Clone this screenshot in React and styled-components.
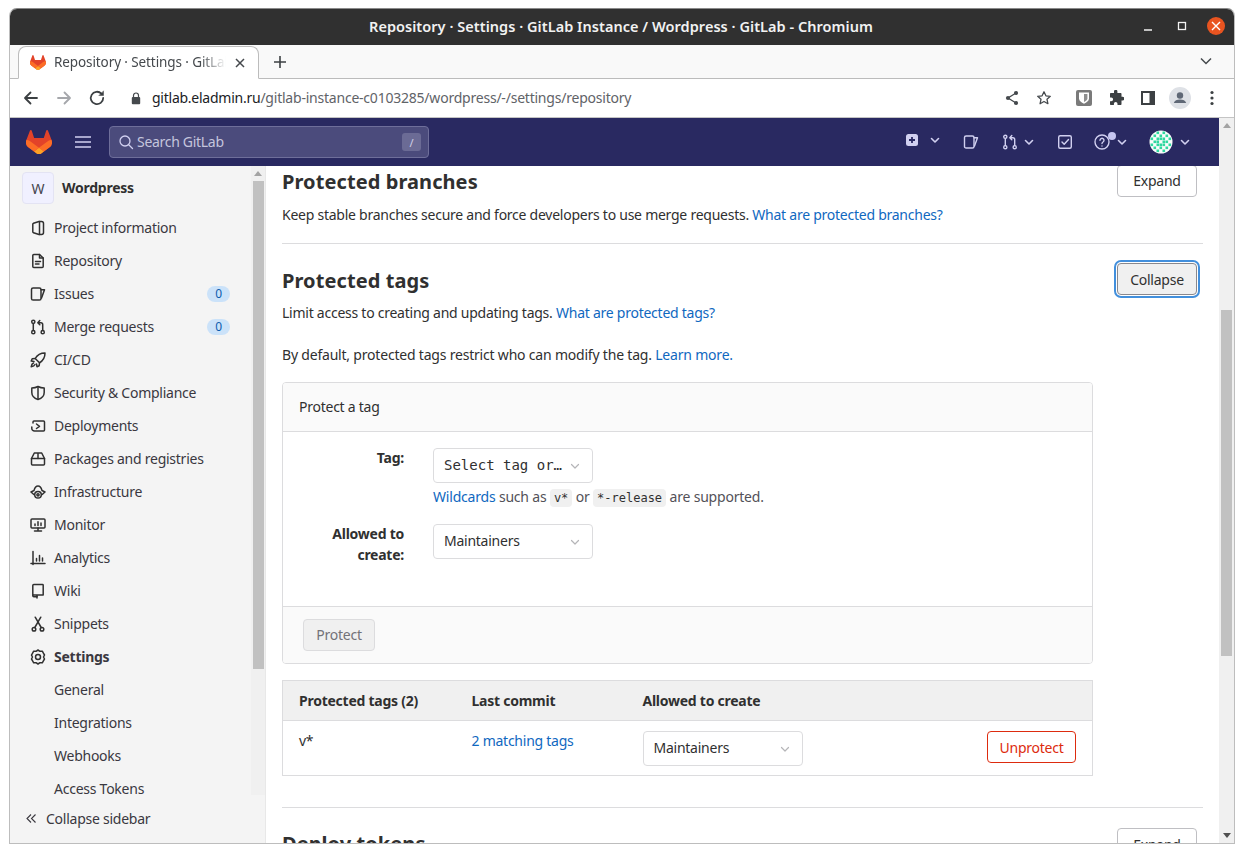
import React from 'react';
import styled, { createGlobalStyle } from 'styled-components';

const Global = createGlobalStyle`
  html, body { margin: 0; padding: 0; background: #fff; overflow: hidden; }
  body { font-family: "Noto Sans", "Open Sans", sans-serif; font-size: 14px; color: #303030; letter-spacing: -0.25px; }
  * { box-sizing: border-box; }
`;

const Window = styled.div`
  margin: 8px 0 0 9px;
  width: 1226px;
  height: 836px;
  border: 1px solid #bdbdbd;
  border-top-color: #8a8a8a;
  border-radius: 8px 8px 0 0;
  display: flex;
  flex-direction: column;
  overflow: hidden;
  background: #fff;
`;
const TitleBar = styled.div`
  height: 36px;
  flex: none;
  background: #303030;
  color: #f2f2f2;
  display: flex;
  align-items: center;
  position: relative;
  justify-content: center;
  font-size: 14.5px;
  font-weight: 600;
  letter-spacing: 0.04px;
  padding: 0 2px 2px 0;
`;
const WinControls = styled.div`
  position: absolute;
  right: 9px;
  top: 8px;
  display: flex;
  align-items: center;
  gap: 16px;
`;
const CloseCircle = styled.div`
  width: 18px;
  height: 18px;
  border-radius: 50%;
  background: #e95420;
  display: flex;
  align-items: center;
  justify-content: center;
`;
const TabStrip = styled.div`
  height: 34px;
  flex: none;
  background: #f9f9f9;
  border-bottom: 1px solid #bcbcbc;
  display: flex;
  align-items: flex-end;
  padding-left: 8px;
  position: relative;
`;
const Tab = styled.div`
  width: 241px;
  height: 33px;
  margin-bottom: -1px;
  background: #fff;
  border: 1px solid #bcbcbc;
  border-bottom: 1px solid #fff;
  border-radius: 8px 8px 0 0;
  display: flex;
  align-items: center;
  padding-left: 11px;
  gap: 8px;
`;
const TabTitle = styled.span`
  width: 172px;
  overflow: hidden;
  white-space: nowrap;
  font-size: 13.5px;
  letter-spacing: -0.1px;
  color: #45494d;
  margin-top: -2px;
  -webkit-mask-image: linear-gradient(to right, #000 85%, transparent 100%);
  mask-image: linear-gradient(to right, #000 85%, transparent 100%);
`;
const NewTab = styled.div`
  margin: 0 0 7px 14px;
  height: 18px;
  display: flex;
  align-items: center;
`;
const TabMenu = styled.div`
  margin: 0 21px 8px auto;
  height: 18px;
  display: flex;
  align-items: center;
`;
const Toolbar = styled.div`
  height: 39px;
  flex: none;
  background: #fff;
  border-bottom: 1px solid #c4c4c4;
  display: flex;
  align-items: center;
  padding: 0 6px 0 12px;
`;
const NavIcons = styled.div`
  display: flex;
  align-items: center;
  gap: 15px;
  margin-right: 12px;
`;
const UrlPill = styled.div`
  width: 944px;
  height: 30px;
  border-radius: 15px;
  background: #fff;
  display: flex;
  align-items: center;
  padding-left: 13px;
  font-size: 14px;
  white-space: nowrap;
`;
const UrlHost = styled.span`
  color: #202124;
  margin: -2px 0 0 11px;
`;
const UrlPath = styled.span`
  color: #5f6368;
  margin-top: -2px;
  letter-spacing: -0.22px;
`;
const UrlEnd = styled.div`
  margin-left: auto;
  display: flex;
  align-items: center;
  gap: 16px;
  margin-right: 10px;
`;
const ExtIcons = styled.div`
  display: flex;
  align-items: center;
  margin-left: 6px;
`;
const ExtSlot = styled.div`
  width: 32px;
  display: flex;
  align-items: center;
  justify-content: center;
`;
const Viewport = styled.div`
  flex: 1;
  min-height: 0;
  display: flex;
`;
const Page = styled.div`
  flex: 1;
  min-width: 0;
  display: flex;
  flex-direction: column;
`;
const NavBar = styled.header`
  height: 48px;
  flex: none;
  background: #292961;
  display: flex;
  align-items: center;
  padding: 0 0 0 16px;
`;
const Hamburger = styled.div`
  margin-left: 23px;
  margin-right: 18px;
  display: flex;
`;
const SearchBox = styled.div`
  width: 320px;
  height: 32px;
  background: #4b4b7c;
  border: 1px solid #6e6e9a;
  border-radius: 4px;
  display: flex;
  align-items: center;
  padding: 0 7px 0 8px;
  color: #c5c5dd;
  font-size: 14px;
  gap: 3px;
`;
const SearchText = styled.span`
  margin-top: -2px;
  letter-spacing: -0.3px;
`;
const SlashKey = styled.span`
  margin-left: auto;
  width: 19px;
  height: 18px;
  border-radius: 3px;
  background: #6b6b95;
  color: #d1d0e8;
  font-size: 11px;
  display: flex;
  align-items: center;
  justify-content: center;
`;
const NavRight = styled.div`
  margin-left: auto;
  display: flex;
  align-items: center;
  margin-right: 28px;
`;
const NavGroup = styled.div`
  display: flex;
  align-items: center;
  gap: ${p => p.$gap ?? 5}px;
  margin-left: ${p => p.$ml ?? 0}px;
  margin-top: ${p => p.$mt ?? 0}px;
  position: relative;
`;
const Dot = styled.span`
  position: absolute;
  width: 8px;
  height: 8px;
  border-radius: 50%;
  background: #c5c5f0;
  left: 14px;
  top: -2px;
`;
const Body = styled.div`
  flex: 1;
  min-height: 0;
  display: flex;
`;
const Sidebar = styled.aside`
  width: 256px;
  flex: none;
  background: #f4f4f4;
  display: flex;
  flex-direction: column;
  border-right: 1px solid #e8e8e8;
`;
const SideTop = styled.div`
  flex: 1;
  min-height: 0;
  display: flex;
`;
const SideScroll = styled.nav`
  flex: 1;
  min-width: 0;
  overflow: hidden;
  padding: 6px 21px 0 12px;
`;
const ProjectRow = styled.div`
  display: flex;
  align-items: center;
  height: 32px;
  gap: 8px;
  margin-bottom: 7px;
`;
const ProjectAvatar = styled.div`
  width: 32px;
  height: 32px;
  border-radius: 4px;
  background: #f0f0ff;
  border: 1px solid #e3e3f3;
  display: flex;
  align-items: center;
  justify-content: center;
  font-size: 14px;
  color: #45454d;
`;
const ProjectName = styled.span`
  font-weight: 700;
  font-size: 14px;
  margin-top: -2px;
`;
const NavItem = styled.div`
  height: 33px;
  display: flex;
  align-items: center;
  padding-left: ${p => (p.$sub ? 32 : 8)}px;
  gap: 8px;
  font-size: 14px;
  color: #3a383f;
  font-weight: ${p => (p.$active ? 700 : 400)};
  white-space: nowrap;
`;
const ItemIcon = styled.svg`
  width: 16px;
  height: 16px;
  flex: none;
  fill: none;
  stroke: #303030;
  stroke-width: 1.5;
  stroke-linecap: round;
  stroke-linejoin: round;
`;
const Badge = styled.span`
  margin-left: auto;
  width: 23px;
  height: 16px;
  border-radius: 8px;
  background: #cbe2f9;
  color: #0b5cad;
  font-size: 12px;
  display: flex;
  align-items: center;
  justify-content: center;
`;
const CollapseBar = styled.div`
  height: 48px;
  flex: none;
  display: flex;
  align-items: center;
  padding: 0 0 2px 16px;
  gap: 9px;
  font-size: 14px;
  color: #3a383f;
`;
const Track = styled.div`
  width: ${p => p.$w}px;
  flex: none;
  background: #f0f0f0;
  display: flex;
  flex-direction: column;
  align-items: center;
`;
const Arrow = styled.div`
  width: 0;
  height: 0;
  flex: none;
  border-left: 4px solid transparent;
  border-right: 4px solid transparent;
  ${p => (p.$down ? 'border-top: 5px solid #505050;' : 'border-bottom: 5px solid #a3a3a3;')}
  margin: ${p => (p.$down ? 'auto 0 5px' : '5px 0 0')};
`;
const Thumb = styled.div`
  width: 11px;
  flex: none;
  background: #c1c1c1;
`;
const Content = styled.main`
  flex: 1;
  min-width: 0;
  overflow: hidden;
  padding: 0 16px;
`;
const Section = styled.section`
  border-bottom: 1px solid #dcdcde;
  padding: ${p => p.$top}px 0 ${p => p.$bottom}px;
`;
const SectionHead = styled.div`
  display: flex;
  align-items: flex-start;
  justify-content: space-between;
  padding-right: 6px;
`;
const H4 = styled.h4`
  margin: 0;
  font-size: 20px;
  line-height: 32px;
  font-weight: 700;
  letter-spacing: 0.08px;
  color: #303030;
`;
const Button = styled.button`
  font: inherit;
  letter-spacing: inherit;
  font-size: 14px;
  height: 32px;
  padding: 0 0 ${p => p.$pb ?? 0}px;
  width: ${p => p.$w}px;
  border-radius: 4px;
  background: #fff;
  border: 1px solid #bfbfc3;
  color: #303030;
  flex: none;
`;
const ExpandTop = styled(Button)`
  margin-top: -1px;
`;
const CollapseBtn = styled(Button)`
  background: #f0f0f0;
  border-color: #89888d;
  box-shadow: 0 0 0 1px #fff, 0 0 0 3px #428fdc;
  margin-top: -2px;
`;
const ProtectBtn = styled(Button)`
  background: #f0f0f0;
  border-color: #dcdcde;
  color: #737278;
`;
const DangerBtn = styled(Button)`
  border-color: #dd2b0e;
  color: #dd2b0e;
`;
const Para = styled.p`
  margin: ${p => p.$mt ?? 0}px 0 0;
  line-height: 20px;
  font-size: 14px;
  white-space: nowrap;
  letter-spacing: ${p => p.$ls ?? -0.25}px;
`;
const A = styled.a`
  color: #1068bf;
  text-decoration: none;
`;
const Card = styled.div`
  width: 811px;
  margin-top: 17px;
  border: 1px solid #dcdcde;
  border-radius: 4px;
  overflow: hidden;
`;
const CardHead = styled.div`
  height: 49px;
  padding: 0 0 2px 16px;
  display: flex;
  align-items: center;
  background: #fafafa;
  border-bottom: 1px solid #dcdcde;
`;
const CardBody = styled.div`
  height: 174px;
  padding-top: 16px;
  display: grid;
  grid-template-columns: 121px 1fr;
  column-gap: 29px;
  align-content: start;
`;
const Label = styled.label`
  font-weight: 700;
  text-align: right;
  line-height: 21px;
  margin-top: -1px;
`;
const Field = styled.div`
  margin-bottom: ${p => p.$mb ?? 0}px;
`;
const Select = styled.div`
  width: 160px;
  height: 35px;
  border: 1px solid #dcdcde;
  border-radius: 4px;
  background: #fff;
  display: flex;
  align-items: center;
  padding: 0 11px 0 10px;
  font-size: 14px;
  font-family: ${p => (p.$mono ? '"DejaVu Sans Mono", monospace' : 'inherit')};
  letter-spacing: ${p => (p.$mono ? '0' : 'inherit')};
  color: #303030;
  justify-content: space-between;
  white-space: nowrap;
`;
const SelectText = styled.span`
  margin-top: -2px;
`;
const Help = styled.div`
  margin-top: 4px;
  line-height: 20px;
  color: #535158;
  white-space: nowrap;
  font-size: 14px;
  letter-spacing: -0.2px;
`;
const Code = styled.code`
  font-family: "DejaVu Sans Mono", monospace;
  font-size: 12px;
  letter-spacing: 0;
  background: #f0f0f0;
  border-radius: 4px;
  padding: 2px 4px;
  color: #303030;
`;
const CardFoot = styled.div`
  height: 57px;
  background: #fafafa;
  border-top: 1px solid #dcdcde;
  padding: 12px 20px;
`;
const Table = styled.table`
  width: 811px;
  margin-top: 16px;
  border-collapse: collapse;
  border: 1px solid #dcdcde;
  table-layout: fixed;
`;
const Th = styled.th`
  background: #f0f0f0;
  height: 40px;
  padding: 0 0 0 16px;
  text-align: left;
  font-weight: 700;
  width: ${p => p.$w ? `${p.$w}px` : 'auto'};
  border-bottom: 1px solid #dcdcde;
  white-space: nowrap;
`;
const Td = styled.td`
  height: 55px;
  padding: 10px 0 0 16px;
  vertical-align: top;
  line-height: 20px;
`;
const TdAct = styled.td`
  padding: 10px 16px 0 0;
  vertical-align: top;
  text-align: right;
`;

const Chev = ({ c = '#d1d0f0', s = 12, w = 1.6 }) => (
  <svg width={s} height={s} viewBox="0 0 12 12" fill="none" stroke={c} strokeWidth={w} strokeLinecap="round" strokeLinejoin="round"><path d="M2.5 4.5 6 8l3.5-3.5" /></svg>
);
const SelectChev = () => <Chev c="#b5b5b8" s={12} w={1.2} />;

const Tanuki = ({ s = 25 }) => (
  <svg width={s} height={s * 24 / 25} viewBox="0 0 25 24">
    <path d="m24.507 9.5-.034-.09L21.082.562a.896.896 0 0 0-1.694.091l-2.29 7.01H7.825L5.535.653a.898.898 0 0 0-1.694-.09L.451 9.411.416 9.5a6.297 6.297 0 0 0 2.09 7.278l.012.01.03.022 5.16 3.867 2.56 1.935 1.554 1.176a1.051 1.051 0 0 0 1.268 0l1.555-1.176 2.56-1.935 5.197-3.89.014-.01A6.297 6.297 0 0 0 24.507 9.5Z" fill="#E24329" />
    <path d="m24.507 9.5-.034-.09a11.44 11.44 0 0 0-4.56 2.051l-7.447 5.632 4.742 3.584 5.197-3.89.014-.01A6.297 6.297 0 0 0 24.507 9.5Z" fill="#FC6D26" />
    <path d="m7.707 20.677 2.56 1.935 1.555 1.176a1.051 1.051 0 0 0 1.268 0l1.555-1.176 2.56-1.935-4.743-3.584-4.755 3.584Z" fill="#FCA326" />
    <path d="M5.01 11.461a11.43 11.43 0 0 0-4.56-2.05L.416 9.5a6.297 6.297 0 0 0 2.09 7.278l.012.01.03.022 5.16 3.867 4.745-3.584-7.444-5.632Z" fill="#FC6D26" />
  </svg>
);

const issuePath = <><rect x="1.500" y="2" width="9.500" height="12" rx="1.600" /><path d="M11 3.800h3.500L11.500 12" /></>;
const mergePath = <><circle cx="3.300" cy="2.800" r="1.600" /><circle cx="3.300" cy="13.200" r="1.600" /><circle cx="12.700" cy="13.200" r="1.600" /><path d="M3.300 4.400v7.200M12.700 11.600V5.500c0-1-.8-1.800-1.800-1.800H8M9.800 1.600 7.800 3.700l2 2" /></>;

const icons = {
  project: <><path d="M3.500 3.300 9 1.500h2.500a2 2 0 0 1 2 2v9a2 2 0 0 1-2 2H9l-5.500-1.800a1 1 0 0 1-.7-1V4.300a1 1 0 0 1 .7-1Z" /><path d="M9.500 1.500v13" /></>,
  repo: <><path d="M2.800 2.500c0-.6.4-1 1-1h5.700L13.200 5v8.500c0 .6-.4 1-1 1H3.800c-.6 0-1-.4-1-1Z" /><path d="M9.500 1.500V5h3.700M5.500 8.500h5M5.500 11h3.500" /></>,
  issues: issuePath,
  merge: mergePath,
  rocket: <><path d="M15 1c-4.200 0-7.500 1.500-9.800 5.500L9.500 10.800C13.500 8.500 15 5.200 15 1Z" /><path d="M5.200 6.500 2.200 6.800 1.200 9 4 9.500M9.500 10.800l-.3 3-2.200 1L6.500 12" /><path d="M3.500 11c-1.200.5-2 1.500-2.300 3.800 2.300-.3 3.300-1.100 3.800-2.300" /></>,
  shield: <><path d="M1.800 3c2.400 0 4.400-.5 6.200-1.500C9.800 2.500 11.800 3 14.200 3v4.500c0 3.300-2.300 5.700-6.200 7-3.900-1.300-6.200-3.700-6.200-7Z" /><path d="M8 2v12" /></>,
  deploy: <><path d="M3 5V4c0-.6.4-1 1-1h9.500c.6 0 1 .4 1 1v8c0 .6-.4 1-1 1H4.500C3 13 1.800 12 1.800 10.500V9" /><path d="m6.500 6 3 2.300-3 2.200" /></>,
  pkg: <><path d="M1.500 7.500h13v5.500c0 .6-.4 1-1 1h-11c-.6 0-1-.4-1-1Z" /><path d="m1.500 7.500 2.800-5.500h7.400l2.800 5.500M8 2v5.500" /></>,
  infra: <><path d="M3.800 10.500 1 8l3-1.500C4.800 3.500 6.200 2 8 2s3.200 1.500 4 4.500L15 8l-2.800 2.500" /><circle cx="8" cy="10.800" r="3.300" /><circle cx="8" cy="10.800" r="1.100" /></>,
  monitor: <><rect x="1" y="2" width="14" height="9" rx="1" /><path d="M4.500 14h7M8 11v3M5 8.500V7M8 8.500V4.800M11 8.500V6" /></>,
  chart: <><path d="M3 1.500v13M1 13.500h14M6.500 11V8.500M9.500 11V5.500M12.500 11V8" /></>,
  book: <><path d="M2.800 2.500c0-.6.4-1 1-1h8.700c.4 0 .7.300.7.700v9.800H3.800c-.6 0-1 .4-1 1ZM2.800 12.800c0 .6.400 1 1 1h3.500M7 12.800v2.200" /></>,
  snippet: <><circle cx="4" cy="13.200" r="1.800" /><circle cx="12" cy="13.200" r="1.800" /><path d="M4.800 11.500 10.800 1.200M11.200 11.500 5.200 1.200" /></>,
  settings: <><path d="M8 1 10 2.300l2.300-.1 1.100 2 1.100 1.800L13.500 8l1 2-1.100 1.900-1.100 1.900-2.300-.1L8 15l-2-1.300-2.300.1-1.100-1.900L1.500 10l1-2-1-1.900 1.100-1.900 1.100-2L6 2.300Z" /><circle cx="8" cy="8" r="2.500" /></>,
};

const items = [
  ['project', 'Project information'],
  ['repo', 'Repository'],
  ['issues', 'Issues', '0'],
  ['merge', 'Merge requests', '0'],
  ['rocket', 'CI/CD'],
  ['shield', 'Security & Compliance'],
  ['deploy', 'Deployments'],
  ['pkg', 'Packages and registries'],
  ['infra', 'Infrastructure'],
  ['monitor', 'Monitor'],
  ['chart', 'Analytics'],
  ['book', 'Wiki'],
  ['snippet', 'Snippets'],
];

const NavStroke = ({ children }) => (
  <svg width="16" height="16" viewBox="0 0 16 16" fill="none" stroke="#d1d0f0" strokeWidth="1.4" strokeLinecap="round" strokeLinejoin="round">{children}</svg>
);

const G = ({ c = '#3c4043', sw = 2, s = 16, children, vb = '0 0 16 16' }) => (
  <svg width={s} height={s} viewBox={vb} fill="none" stroke={c} strokeWidth={sw} strokeLinecap="round" strokeLinejoin="round">{children}</svg>
);

const identiRows = ['..G.G..', '.G.G.G.', 'G.GGG.G', '.GG.GG.', 'G.GGG.G', '.G.G.G.', '..G.G..'];
const Identicon = () => (
  <svg width="24" height="24" viewBox="0 0 24 24">
    <defs><clipPath id="av"><circle cx="12" cy="12" r="11.500" /></clipPath></defs>
    <g clipPath="url(#av)">
      <rect width="24" height="24" fill="#fafcfb" />
      {identiRows.flatMap((row, y) => [...row].map((ch, x) => (ch === 'G' ? <rect key={`${x}-${y}`} x={x * 3 + 1.500} y={y * 3 + 1.500} width="2.600" height="2.600" fill="#2fd8a0" /> : null)))}
    </g>
  </svg>
);

export default function App() {
  return (
    <>
      <Global />
      <Window>
        <TitleBar>
          Repository · Settings · GitLab Instance / Wordpress · GitLab - Chromium
          <WinControls>
            <svg width="18" height="18" viewBox="0 0 18 18"><path d="M5 13h8" stroke="#f2f2f2" strokeWidth="1.3" /></svg>
            <svg width="18" height="18" viewBox="0 0 18 18" fill="none"><rect x="5.500" y="5.500" width="7" height="7" stroke="#f2f2f2" strokeWidth="1.300" /></svg>
            <CloseCircle>
              <svg width="10" height="10" viewBox="0 0 10 10"><path d="M1 1l8 8M9 1l-8 8" stroke="#fff" strokeWidth="1.400" /></svg>
            </CloseCircle>
          </WinControls>
        </TitleBar>
        <TabStrip>
          <Tab>
            <Tanuki s={16} />
            <TabTitle>Repository · Settings · GitLab Instance</TabTitle>
            <svg width="12" height="12" viewBox="0 0 12 12"><path d="M2 2l8 8M10 2l-8 8" stroke="#45494d" strokeWidth="1.500" /></svg>
          </Tab>
          <NewTab>
            <svg width="14" height="14" viewBox="0 0 14 14"><path d="M7 1v12M1 7h12" stroke="#3c4043" strokeWidth="1.600" /></svg>
          </NewTab>
          <TabMenu>
            <svg width="14" height="14" viewBox="0 0 14 14" fill="none"><path d="M2 4.500 7 9.500l5-5" stroke="#45494d" strokeWidth="1.500" /></svg>
          </TabMenu>
        </TabStrip>
        <Toolbar>
          <NavIcons>
            <G s={18} vb="0 0 18 18" sw={1.800}><path d="M15 9H3.500M8.500 3.500 3 9l5.500 5.500" /></G>
            <G s={18} vb="0 0 18 18" sw={1.800} c="#a5a7ab"><path d="M3 9h11.500M9.500 3.500 15 9l-5.500 5.500" /></G>
            <G s={18} vb="0 0 18 18" sw={1.800}><path d="M15.200 9a6.200 6.200 0 1 1-1.800-4.400" /><path d="M15.500 2.200v4.300h-4.300Z" fill="#3c4043" strokeWidth="0.500" /></G>
          </NavIcons>
          <UrlPill>
            <svg width="10" height="13" viewBox="0 0 10 13"><path d="M2.500 5V3.500a2.500 2.500 0 0 1 5 0V5" fill="none" stroke="#45494d" strokeWidth="1.200" /><rect x="0.800" y="5" width="8.400" height="7.300" rx="1" fill="#45494d" /></svg>
            <UrlHost>gitlab.eladmin.ru</UrlHost>
            <UrlPath>/gitlab-instance-c0103285/wordpress/-/settings/repository</UrlPath>
            <UrlEnd>
              <svg width="16" height="16" viewBox="0 0 16 16"><path d="M12 3 4 8l8 5" fill="none" stroke="#45494d" strokeWidth="1.300" /><circle cx="12" cy="3" r="2.100" fill="#45494d" /><circle cx="4" cy="8" r="2.100" fill="#45494d" /><circle cx="12" cy="13" r="2.100" fill="#45494d" /></svg>
              <G s={16} sw={1.300} c="#45494d"><path d="m8 1.800 1.900 4 4.400.5-3.300 3 .9 4.400L8 11.500l-3.900 2.200.9-4.400-3.300-3 4.400-.5Z" /></G>
            </UrlEnd>
          </UrlPill>
          <ExtIcons>
            <ExtSlot>
              <svg width="16" height="16" viewBox="0 0 16 16"><rect width="16" height="16" rx="2" fill="#7a7a7a" /><path d="M3 2.500h10v6c0 2.500-2.500 4-5 5.200C5.500 12.500 3 11 3 8.500Z" fill="#fff" /><path d="M8 4h3.400v4.500c0 1.500-1.700 2.700-3.400 3.500Z" fill="#8f8f8f" /></svg>
            </ExtSlot>
            <ExtSlot>
              <svg width="16" height="16" viewBox="0 0 16 16"><path d="M6 1.500a1.700 1.700 0 0 1 3.400 0V3h3.100c.6 0 1 .4 1 1v2.800h1.200a1.800 1.800 0 0 1 0 3.600h-1.200V14c0 .6-.4 1-1 1H9.500v-1.300a1.800 1.800 0 0 0-3.600 0V15H3c-.6 0-1-.4-1-1v-2.800h1.200a1.900 1.900 0 0 0 0-3.800H2V4c0-.6.4-1 1-1h3Z" fill="#3c4043" /></svg>
            </ExtSlot>
            <ExtSlot>
              <svg width="14" height="14" viewBox="0 0 14 14" fill="none"><rect x="1" y="1" width="12" height="12" stroke="#3c4043" strokeWidth="2" /><rect x="8.500" y="1" width="4.500" height="12" fill="#3c4043" /></svg>
            </ExtSlot>
            <ExtSlot>
              <svg width="22" height="22" viewBox="0 0 22 22"><circle cx="11" cy="11" r="11" fill="#dee1e6" /><circle cx="11" cy="8.500" r="3.200" fill="#5f6876" /><path d="M4.800 16c.6-2.500 3.200-3.500 6.200-3.500s5.600 1 6.200 3.500Z" fill="#5f6876" /></svg>
            </ExtSlot>
            <ExtSlot>
              <svg width="14" height="16" viewBox="0 0 14 16"><circle cx="7" cy="2.500" r="1.600" fill="#3c4043" /><circle cx="7" cy="8" r="1.600" fill="#3c4043" /><circle cx="7" cy="13.500" r="1.600" fill="#3c4043" /></svg>
            </ExtSlot>
          </ExtIcons>
        </Toolbar>
        <Viewport>
          <Page>
            <NavBar>
              <Tanuki s={26} />
              <Hamburger>
                <svg width="16" height="12" viewBox="0 0 16 12"><path d="M0 1h16M0 6h16M0 11h16" stroke="#d1d0f0" strokeWidth="1.500" /></svg>
              </Hamburger>
              <SearchBox>
                <svg width="16" height="16" viewBox="0 0 16 16" fill="none"><circle cx="7" cy="7" r="5" stroke="#d1d0f0" strokeWidth="1.300" /><path d="m11 11 3.500 3.500" stroke="#d1d0f0" strokeWidth="1.300" strokeLinecap="round" /></svg>
                <SearchText>Search GitLab</SearchText>
                <SlashKey>/</SlashKey>
              </SearchBox>
              <NavRight>
                <NavGroup $gap={10} $mt={-4}>
                  <svg width="14" height="14" viewBox="0 0 14 14"><rect x="1" y="1" width="12" height="12" rx="2.500" fill="#d1d0f0" /><path d="M7 4v6M4 7h6" stroke="#292961" strokeWidth="1.800" /></svg>
                  <Chev />
                </NavGroup>
                <NavGroup $ml={22}>
                  <NavStroke>{issuePath}</NavStroke>
                </NavGroup>
                <NavGroup $ml={23} $gap={5}>
                  <NavStroke>{mergePath}</NavStroke>
                  <Chev />
                </NavGroup>
                <NavGroup $ml={22}>
                  <NavStroke><rect x="1.700" y="1.700" width="12.600" height="12.600" rx="1.500" /><path d="m5 8 2.200 2.200L11.500 5.500" /></NavStroke>
                </NavGroup>
                <NavGroup $ml={21} $gap={6}>
                  <NavStroke><circle cx="8" cy="8" r="7" /><path d="M6 6.200a2 2 0 1 1 3 1.800c-.7.400-1 .8-1 1.500M8 12v.1" /></NavStroke>
                  <Dot />
                  <Chev />
                </NavGroup>
                <NavGroup $ml={21} $gap={6}>
                  <Identicon />
                  <Chev />
                </NavGroup>
              </NavRight>
            </NavBar>
            <Body>
              <Sidebar>
                <SideTop>
                  <SideScroll>
                    <ProjectRow>
                      <ProjectAvatar>W</ProjectAvatar>
                      <ProjectName>Wordpress</ProjectName>
                    </ProjectRow>
                    {items.map(([ic, label, badge]) => (
                      <NavItem key={label}>
                        <ItemIcon viewBox="0 0 16 16">{icons[ic]}</ItemIcon>
                        {label}
                        {badge && <Badge>{badge}</Badge>}
                      </NavItem>
                    ))}
                    <NavItem $active>
                      <ItemIcon viewBox="0 0 16 16">{icons.settings}</ItemIcon>
                      Settings
                    </NavItem>
                    {['General', 'Integrations', 'Webhooks', 'Access Tokens'].map(l => (
                      <NavItem $sub key={l}>{l}</NavItem>
                    ))}
                  </SideScroll>
                  <Track $w={14}>
                    <Arrow />
                    <Thumb style={{ marginTop: 5, height: 488 }} />
                  </Track>
                </SideTop>
                <CollapseBar>
                  <svg width="11" height="11" viewBox="0 0 11 11" fill="none" stroke="#3a383f" strokeWidth="1.100"><path d="M5 1.500 1 5.500l4 4M9.500 1.500l-4 4 4 4" /></svg>
                  Collapse sidebar
                </CollapseBar>
              </Sidebar>
              <Content>
                <Section $top={0} $bottom={18}>
                  <SectionHead>
                    <H4>Protected branches</H4>
                    <ExpandTop $w={80} $pb={2}>Expand</ExpandTop>
                  </SectionHead>
                  <Para $mt={7}>Keep stable branches secure and force developers to use merge requests. <A>What are protected branches?</A></Para>
                </Section>
                <Section $top={21} $bottom={31}>
                  <SectionHead>
                    <H4>Protected tags</H4>
                    <CollapseBtn $w={80}>Collapse</CollapseBtn>
                  </SectionHead>
                  <Para $mt={6}>Limit access to creating and updating tags. <A>What are protected tags?</A></Para>
                  <Para $mt={22} $ls={-0.2}>By default, protected tags restrict who can modify the tag. <A>Learn more.</A></Para>
                  <Card>
                    <CardHead>Protect a tag</CardHead>
                    <CardBody>
                      <Label>Tag:</Label>
                      <Field $mb={16}>
                        <Select $mono><SelectText>Select tag or…</SelectText><SelectChev /></Select>
                        <Help><A>Wildcards</A> such as <Code>v*</Code> or <Code>*-release</Code> are supported.</Help>
                      </Field>
                      <Label>Allowed to create:</Label>
                      <Field>
                        <Select><SelectText>Maintainers</SelectText><SelectChev /></Select>
                      </Field>
                    </CardBody>
                    <CardFoot>
                      <ProtectBtn $w={72} $pb={2}>Protect</ProtectBtn>
                    </CardFoot>
                  </Card>
                  <Table>
                    <thead>
                      <tr>
                        <Th $w={173}>Protected tags (2)</Th>
                        <Th $w={171}>Last commit</Th>
                        <Th $w={300}>Allowed to create</Th>
                        <Th />
                      </tr>
                    </thead>
                    <tbody>
                      <tr>
                        <Td>v*</Td>
                        <Td><A>2 matching tags</A></Td>
                        <Td><Select><SelectText>Maintainers</SelectText><SelectChev /></Select></Td>
                        <TdAct><DangerBtn $w={89}>Unprotect</DangerBtn></TdAct>
                      </tr>
                    </tbody>
                  </Table>
                </Section>
                <Section $top={20} $bottom={0}>
                  <SectionHead>
                    <H4>Deploy tokens</H4>
                    <Button $w={80}>Expand</Button>
                  </SectionHead>
                </Section>
              </Content>
            </Body>
          </Page>
          <Track $w={15}>
            <Arrow />
            <Thumb style={{ marginTop: 182, height: 346 }} />
            <Arrow $down />
          </Track>
        </Viewport>
      </Window>
    </>
  );
}
